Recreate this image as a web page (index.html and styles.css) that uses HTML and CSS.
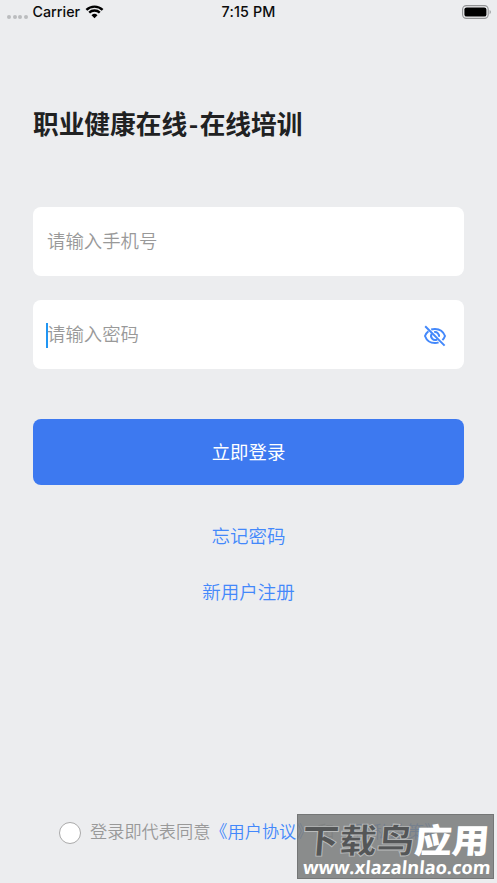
FILE: index.html
```html
<!DOCTYPE html>
<html lang="zh-CN">
<head>
    <meta charset="UTF-8">
    <meta name="viewport" content="width=device-width, initial-scale=1.0">
    <title>职业健康在线-在线培训</title>
    <link rel="stylesheet" href="styles.css">
</head>
<body>
    <header class="status-bar">
        <div class="carrier">
            <span class="signal"><i></i><i></i><i></i><i></i></span>
            <span>Carrier</span>
            <svg class="wifi" viewBox="0 0 18 13" width="19" height="13.5">
                <path d="M1.2 4.7a11.2 11.2 0 0 1 15.6 0M3.9 7.4a7.3 7.3 0 0 1 10.2 0" fill="none" stroke="#000" stroke-width="2.3"/>
                <path d="M9 12.8 6.1 9.9a4.2 4.2 0 0 1 5.8 0z"/>
            </svg>
        </div>
        <span class="time">7:15 PM</span>
        <svg class="battery" viewBox="0 0 30 14" width="30" height="14">
            <rect x=".6" y=".6" width="25.6" height="12.8" rx="3.8" fill="none" stroke="#929395" stroke-width="1.1"/>
            <rect x="2.4" y="2.4" width="22" height="9.2" rx="2.2"/>
            <path d="M27.6 5v4.2c1.6-.6 1.6-3.6 0-4.2z" fill="#929395"/>
        </svg>
    </header>

    <main class="login">
        <h1 class="title">职业健康在线<span>-</span>在线培训</h1>
        <form class="login-form">
            <div class="field">
                <input type="text" placeholder="请输入手机号">
            </div>
            <div class="field focused">
                <input type="password" placeholder="请输入密码">
                <svg class="eye" viewBox="0 0 24 24" width="24" height="24" fill="none" stroke="#4388fb" stroke-width="2">
                    <path d="M8.2 5.5A11 11 0 0 1 12 4.9c4.8 0 8.4 2.7 10 7.1a11 11 0 0 1-2.6 4.1M15.6 18.4A11 11 0 0 1 12 19.1c-4.8 0-8.4-2.7-10-7.1a11 11 0 0 1 3.4-4.7"/>
                    <path d="M11.2 8.1a4 4 0 0 1 4.7 4.7M8.7 9.8a4 4 0 0 0 5.5 5.5"/>
                    <path d="M2.2 2.2 21.6 21.6"/>
                </svg>
            </div>
            <button type="button" class="login-btn">立即登录</button>
        </form>
        <nav class="links">
            <a>忘记密码</a>
            <a>新用户注册</a>
        </nav>
    </main>

    <footer class="agreement">
        <span class="radio"></span>
        <p>登录即代表同意<a>《用户协议》</a> 和 <a>《隐私政策》</a></p>
    </footer>

    <div class="watermark">
        <div class="mark-name"><span>下载鸟</span>应用</div>
        <div class="mark-url">www.xlazalnlao.com</div>
    </div>
</body>
</html>
```
FILE: styles.css
```css
* {
    margin: 0;
    padding: 0;
    box-sizing: border-box;
}

body {
    position: relative;
    display: flex;
    flex-direction: column;
    height: 883px;
    overflow: hidden;
    background: #ecedef;
    font-family: "Noto Sans CJK SC", sans-serif;
}

/* 状态栏 */
.status-bar {
    display: grid;
    grid-template-columns: 1fr auto 1fr;
    align-items: center;
    height: 24px;
    padding: 0 5px 0 7px;
    font: 500 14.3px/24px Inter, sans-serif;
    color: #0b0b0b;
}

.carrier {
    display: flex;
    align-items: center;
    gap: 5px;
}

.signal {
    display: flex;
    gap: 1.5px;
    padding-top: 9px;
}

.signal i {
    width: 4px;
    height: 4px;
    border-radius: 50%;
    background: #bbbcbe;
}

.time {
    margin-right: 2px;
    letter-spacing: 0.15px;
}

.battery {
    justify-self: end;
}

/* 登录表单 */
.login {
    flex: 1;
    padding: 80px 33px 0;
}

.title {
    font-size: 25.7px;
    line-height: 38px;
    font-weight: 700;
    color: #202122;
}

.title span {
    padding: 0 1.5px;
}

.login-form {
    margin-top: 65px;
}

.field {
    display: flex;
    align-items: center;
    position: relative;
    height: 69px;
    margin-bottom: 24px;
    padding: 0 17px 0 14px;
    background: #fff;
    border-radius: 8px;
}

.field input {
    flex: 1;
    min-width: 0;
    height: 40px;
    padding-bottom: 3px;
    border: none;
    outline: none;
    background: none;
    font: 350 18.4px "Noto Sans CJK SC", sans-serif;
}

.field input::placeholder {
    color: #999;
    opacity: 1;
}

.eye {
    margin-top: 2px;
}

/* 输入光标 */
.focused::before {
    content: '';
    position: absolute;
    left: 13px;
    top: 23px;
    width: 2px;
    height: 25px;
    background: #2196f3;
}

.login-btn {
    display: block;
    width: 100%;
    height: 66px;
    margin-top: 50px;
    padding-bottom: 2px;
    border: none;
    border-radius: 8px;
    background: #3d79f0;
    color: #fff;
    font: 400 18.4px "Noto Sans CJK SC", sans-serif;
}

.links {
    display: flex;
    flex-direction: column;
    align-items: center;
    gap: 28px;
    margin-top: 36px;
    font-size: 18.5px;
    line-height: 28px;
    font-weight: 350;
    color: #4388fb;
}

/* 用户协议 */
.agreement {
    display: flex;
    align-items: center;
    gap: 9px;
    height: 26px;
    margin: 0 0 38px 59px;
    font-size: 17.2px;
    font-weight: 350;
    line-height: 26px;
    color: #999;
    white-space: nowrap;
}

.agreement p {
    margin-top: -3px;
}

.agreement a {
    color: #4388fb;
}

.radio {
    width: 22px;
    height: 22px;
    margin-top: 1px;
    border: 1px solid #aaa;
    border-radius: 50%;
    background: #fff;
}

/* 水印 */
.watermark {
    position: absolute;
    left: 297px;
    top: 814px;
    width: 197px;
    height: 65px;
    border: 1px solid #747676;
    background: rgba(124, 126, 126, 0.88);
    color: #fff;
    white-space: nowrap;
}

.mark-name {
    padding-left: 4px;
    font-size: 37.5px;
    line-height: 42px;
    font-weight: 900;
    transform: scaleY(0.9) skewX(-4deg);
    transform-origin: left center;
    margin-top: 3px;
}

.mark-name span {
    color: #545657;
    -webkit-text-stroke: 1px #b9bbbb;
}

.mark-url {
    margin-top: -4px;
    padding-left: 5px;
    font: 700 18.2px/22px "Open Sans", sans-serif;
    transform: skewX(-5deg);
}
```
